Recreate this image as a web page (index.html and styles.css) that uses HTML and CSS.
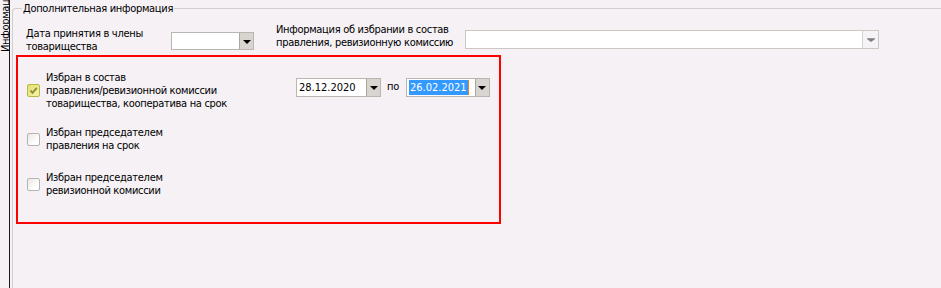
FILE: index.html
```html
<!DOCTYPE html>
<html lang="ru">

<head>
  <meta charset="utf-8">
  <link rel="stylesheet" href="styles.css">
</head>

<body>
  <div class="side-tabs">
    <div class="tab-label">Информация</div>
  </div>

  <div class="page">
    <fieldset class="group">
      <legend>Дополнительная информация</legend>

      <div class="top-row">
        <label class="caption caption-date">Дата принятия в члены<br>товарищества</label>
        <div class="combo combo-short">
          <span class="combo-value"></span>
          <span class="combo-btn"><i class="arrow"></i></span>
        </div>

        <label class="caption caption-info">Информация об избрании в состав<br>правления, ревизионную комиссию</label>
        <div class="combo combo-flat combo-wide">
          <span class="combo-value"></span>
          <span class="combo-btn"><i class="arrow"></i></span>
        </div>
      </div>

      <div class="options">
        <div class="option option-first">
          <span class="check checked">
            <svg width="11" height="11" viewBox="0 0 11 11">
              <path d="M2.5 5.5 L4.5 7.8 L8.8 2.8" fill="none" stroke="#8c8a3a" stroke-width="1.8" />
            </svg>
          </span>
          <span class="option-text">Избран в состав<br>правления/ревизионной комиссии<br>товарищества, кооператива на срок</span>

          <div class="period">
            <div class="combo combo-date">
              <span class="combo-value">28.12.2020</span>
              <span class="combo-btn"><i class="arrow"></i></span>
            </div>
            <span class="period-sep">по</span>
            <div class="combo combo-date combo-date-end">
              <span class="combo-value"><span class="selected">26.02.2021</span></span>
              <span class="combo-btn"><i class="arrow"></i></span>
            </div>
          </div>
        </div>

        <div class="option option-second">
          <span class="check"></span>
          <span class="option-text">Избран председателем<br>правления на срок</span>
        </div>

        <div class="option option-third">
          <span class="check"></span>
          <span class="option-text">Избран председателем<br>ревизионной комиссии</span>
        </div>
      </div>
    </fieldset>
  </div>
</body>

</html>
```

FILE: styles.css
```css
* {
  box-sizing: border-box;
}

body {
  margin: 0;
  height: 288px;
  overflow: hidden;
  display: flex;
  background-color: #f5f1f5;
  font-family: "DejaVu Sans Condensed", "DejaVu Sans", sans-serif;
  font-size: 11px;
  line-height: 13px;
  letter-spacing: -0.3px;
  color: #000;
}

/* vertical tab strip on the left */
.side-tabs {
  width: 10px;
  flex-shrink: 0;
  border-right: 1px solid #1c1c1c;
  overflow: hidden;
}

.tab-label {
  writing-mode: vertical-rl;
  transform: rotate(180deg);
  height: 54px;
  width: 9px;
  line-height: 12px;
  font-size: 11px;
  white-space: nowrap;
  overflow: hidden;
  text-indent: 2px;
}

.page {
  flex: 1;
  display: flex;
  flex-direction: column;
  padding-top: 1px;
  padding-left: 2px;
  min-width: 0;
}

.group {
  flex: 1;
  margin: 0;
  padding: 0;
  min-width: 0;
  border: 1px solid #d2cecb;
  border-right: 0;
  border-bottom: 0;
  border-radius: 4px 0 0 0;
}

.group legend {
  margin-left: 9px;
  padding: 0 1px;
  line-height: 15px;
}

/* first row: two captions with combos */
.top-row {
  display: flex;
  align-items: flex-start;
  padding-top: 7px;
}

.caption {
  white-space: nowrap;
}

.caption-date {
  width: 145px;
  margin-left: 13px;
  margin-top: 4px;
}

.caption-info {
  width: 189px;
  margin-left: 22px;
}

.combo {
  display: flex;
  height: 18px;
  background-color: #fff;
  border: 1px solid #b9b5b1;
}

.combo-value {
  flex: 1;
  display: flex;
  align-items: center;
  padding-left: 1px;
  white-space: nowrap;
  overflow: hidden;
}

.combo-btn {
  width: 14px;
  display: flex;
  align-items: center;
  justify-content: center;
  background-color: #d8d4d0;
  border-left: 1px solid #aaa6a2;
}

.arrow {
  width: 0;
  height: 0;
  border-left: 4px solid transparent;
  border-right: 4px solid transparent;
  border-top: 4px solid #000;
  margin-top: 1px;
}

.combo-short {
  width: 83px;
  margin-top: 9px;
}

.combo-flat {
  border-color: #cbc7c2;
}

.combo-flat .combo-btn {
  width: 16px;
  background-color: #f6f3f6;
  border-left-color: #d8d4d0;
}

.combo-flat .arrow {
  border-top-color: #7c7c7c;
  border-top-width: 3px;
  box-shadow: 0 -1px 0 #9c9c9c;
}

.combo-wide {
  width: 414px;
  height: 19px;
  margin-top: 7px;
}

/* highlighted block with checkboxes */
.options {
  width: 485px;
  height: 169px;
  margin: 2px 0 0 3px;
  padding-left: 9px;
  border: 2px solid #f00;
}

.option {
  display: flex;
  align-items: center;
}

.option-first {
  margin-top: 14px;
}

.option-second {
  margin-top: 16px;
}

.option-third {
  margin-top: 19px;
}

.check {
  width: 13px;
  height: 13px;
  flex-shrink: 0;
  margin-right: 6px;
  display: flex;
  align-items: center;
  justify-content: center;
  border: 1px solid #b7b4b0;
  border-radius: 2px;
  background: linear-gradient(135deg, #e9e7e4, #ffffff 70%);
}

.check.checked {
  border-color: #b9b747;
  background: linear-gradient(135deg, #e2e070, #f5f3a8);
}

.option-text {
  width: 250px;
  white-space: nowrap;
}

.period {
  align-self: flex-start;
  margin-top: 7px;
  display: flex;
  align-items: center;
}

.combo-date {
  width: 85px;
  height: 19px;
  letter-spacing: 0;
}

.combo-date .combo-value {
  padding-left: 2px;
}

.combo-date-end {
  width: 84px;
}

.period-sep {
  margin: 0 7px 2px 6px;
}

.selected {
  display: inline-block;
  line-height: 15px;
  padding: 0 1px;
  background-color: #3399ff;
  color: #fff;
  border-right: 1px solid #f0801e;
}
```
